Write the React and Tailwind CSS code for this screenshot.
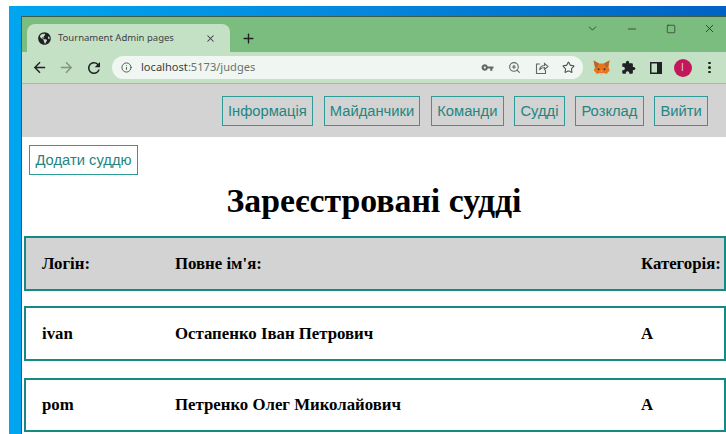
import { ChevronDown, Minus, Square, X, Plus, Info, ZoomIn, Star } from "lucide-react";
import { FaGlobeAmericas } from "react-icons/fa";
import { MdArrowBack, MdArrowForward, MdRefresh, MdExtension, MdVpnKey } from "react-icons/md";

const navLinks = ["Інформація", "Майданчики", "Команди", "Судді", "Розклад", "Вийти"];

const judges = [
  { login: "ivan", name: "Остапенко Іван Петрович", category: "A", box: "mt-[15px] h-[55px] bg-white" },
  { login: "pom", name: "Петренко Олег Миколайович", category: "A", box: "mt-[17px] h-[54px] bg-white" },
];

const FoxIcon = () => (
  <svg width="17" height="16" viewBox="0 0 17 16">
    <path d="M0.500 0.500l5.500 3h5l5.500-3-1 6.500 1.200 3.500-3.200 3.500-2.500-1H6.500l-2.500 1-3.200-3.500L2 7z" fill="#e8751c" />
    <path d="M0.500 0.500l5.500 3-2 4-2-.5z" fill="#b5682c" />
    <path d="M16.500 0.500l-5.500 3 2 4 2-.5z" fill="#b5682c" />
    <path d="M6.500 13h4l-1 2h-2z" fill="#d7c1b3" />
    <path d="M4.500 8l2.500 1-2 1.500zM12.500 8l-2.500 1 2 1.500z" fill="#233447" />
    <path d="M7.300 10.500h2.400l-1.200 2z" fill="#f6a25a" />
  </svg>
);

const ShareIcon = () => (
  <svg width="14" height="14" viewBox="0 0 14 14" fill="none" stroke="#5f6b62" strokeWidth="1.100">
    <path d="M5 3H1.500v9.500h9V9" />
    <path d="M4.500 9c.5-3 2.500-4.500 5-4.500V2.500L13 5.500 9.500 8.500V6.500c-2 0-3.800.8-5 2.500z" />
  </svg>
);

const SidePanelIcon = () => (
  <svg width="12" height="12" viewBox="0 0 12 12">
    <path d="M0 0h12v12H0z" fill="#202124" />
    <path d="M1.500 1.500h5.500v9H1.500z" fill="#c4e1c5" />
  </svg>
);

// one fixed cell in the toolbar so the icons stay on an even 27px step
const Slot = ({ children }) => (
  <div className="flex h-full w-[27px] shrink-0 items-center justify-center">{children}</div>
);

const BrowserChrome = () => (
  <div className="font-['Noto_Sans',sans-serif]">
    <div className="flex h-[35px] overflow-hidden bg-[#7abd7e] pl-[5px]">
      <div className="mt-[7px] flex h-[28px] w-[203px] items-center rounded-t-lg bg-[#c4e1c5] pl-[11px]">
        <FaGlobeAmericas size={13} className="text-[#202124]" />
        <span className="ml-[7px] w-[147px] text-[9.500px] text-[#3c4043]">Tournament Admin pages</span>
        <X size={11} strokeWidth={2.200} className="text-[#3c4043]" />
      </div>
      <div className="mt-[7px] flex h-[28px] w-[36px] items-center justify-center">
        <Plus size={15} strokeWidth={2.200} className="text-[#202124]" />
      </div>
      <div className="ml-auto mr-[-3px] flex h-[23px] items-center text-[#202124]">
        <div className="flex w-[39px] justify-center"><ChevronDown size={13} strokeWidth={1.300} /></div>
        <div className="flex w-[39px] justify-center"><Minus size={12} strokeWidth={1.400} /></div>
        <div className="flex w-[39px] justify-center"><Square size={10} strokeWidth={1.500} /></div>
        <div className="flex w-[39px] justify-center"><X size={13} strokeWidth={1.400} /></div>
      </div>
    </div>
    <div className="flex h-[32px] items-center border-b border-[#a3bda5] bg-[#c4e1c5] pl-[4px]">
      <Slot><MdArrowBack size={17} className="text-[#202124]" /></Slot>
      <Slot><MdArrowForward size={17} className="text-[#7f9581]" /></Slot>
      <Slot><MdRefresh size={18} className="text-[#202124]" /></Slot>
      <div className="ml-[5px] flex h-[23px] w-[471px] items-center rounded-full bg-[#f0f6f1] pl-[9px] pr-[1px]">
        <Info size={11} className="text-[#4a524b]" />
        <span className="ml-[9px] text-[11.100px] text-[#3c4043]">
          localhost<span className="text-[#6b736c]">:5173/judges</span>
        </span>
        <div className="ml-auto flex h-full">
          <Slot><MdVpnKey size={13} className="text-[#5f6b62]" /></Slot>
          <Slot><ZoomIn size={13} className="text-[#5f6b62]" /></Slot>
          <Slot><ShareIcon /></Slot>
          <Slot><Star size={13} className="text-[#4a524b]" /></Slot>
        </div>
      </div>
      <div className="ml-[5px] flex h-full">
        <Slot><FoxIcon /></Slot>
        <Slot><MdExtension size={15} className="text-[#202124]" /></Slot>
        <Slot><SidePanelIcon /></Slot>
        <Slot>
          <div className="flex h-[18px] w-[18px] items-center justify-center rounded-full bg-[#c2185b] font-['Liberation_Sans',sans-serif] text-[10px] text-[#f3c6d8]">
            I
          </div>
        </Slot>
        <Slot>
          <div className="flex flex-col gap-[2px]">
            <span className="h-[2.500px] w-[2.500px] rounded-full bg-[#202124]" />
            <span className="h-[2.500px] w-[2.500px] rounded-full bg-[#202124]" />
            <span className="h-[2.500px] w-[2.500px] rounded-full bg-[#202124]" />
          </div>
        </Slot>
      </div>
    </div>
  </div>
);

const Row = ({ login, name, category, box }) => (
  <div className={`grid grid-cols-[133px_466px_1fr] items-center border-2 border-[#148a85] pl-[16px] text-[16.800px] font-bold text-black ${box}`}>
    <div>{login}</div>
    <div>{name}</div>
    <div className="whitespace-nowrap">{category}</div>
  </div>
);

export default function App() {
  return (
    <div className="h-[434px] w-[726px] overflow-hidden bg-white pl-[9px] pt-[6px]">
      <div className="h-[428px] bg-gradient-to-r from-[#00a6ef] via-[#0586dc] to-[#0062c4] pl-[12px] pt-[10px]">
        <div className="h-[418px] border-l border-t border-[#3d5a4a] bg-white">
          <BrowserChrome />
          <nav className="flex h-[53px] items-start justify-end gap-[10.500px] bg-[#d3d3d3] pr-[18px] pt-[12px] font-['Liberation_Sans',sans-serif]">
            {navLinks.map((link) => (
              <a key={link} className="flex h-[30px] items-center border border-[#2d9c98] px-[5.250px] text-[14.750px] text-[#1f8682]">
                {link}
              </a>
            ))}
          </nav>
          <div className="pl-[2px] pt-[8px] font-['Liberation_Serif',serif]">
            <button className="ml-[5px] flex h-[30px] w-[109px] items-center justify-center border border-[#2d9c98] font-['Liberation_Sans',sans-serif] text-[14.750px] text-[#1f8682]">
              Додати суддю
            </button>
            <h1 className="mt-[6px] h-[55px] pr-[2px] text-center text-[33.750px] font-bold leading-[40px] text-black">
              Зареєстровані судді
            </h1>
            <Row login="Логін:" name="Повне ім'я:" category="Категорія:" box="h-[55px] bg-[#d3d3d3]" />
            {judges.map((judge) => (
              <Row key={judge.login} {...judge} />
            ))}
          </div>
        </div>
      </div>
    </div>
  );
}
